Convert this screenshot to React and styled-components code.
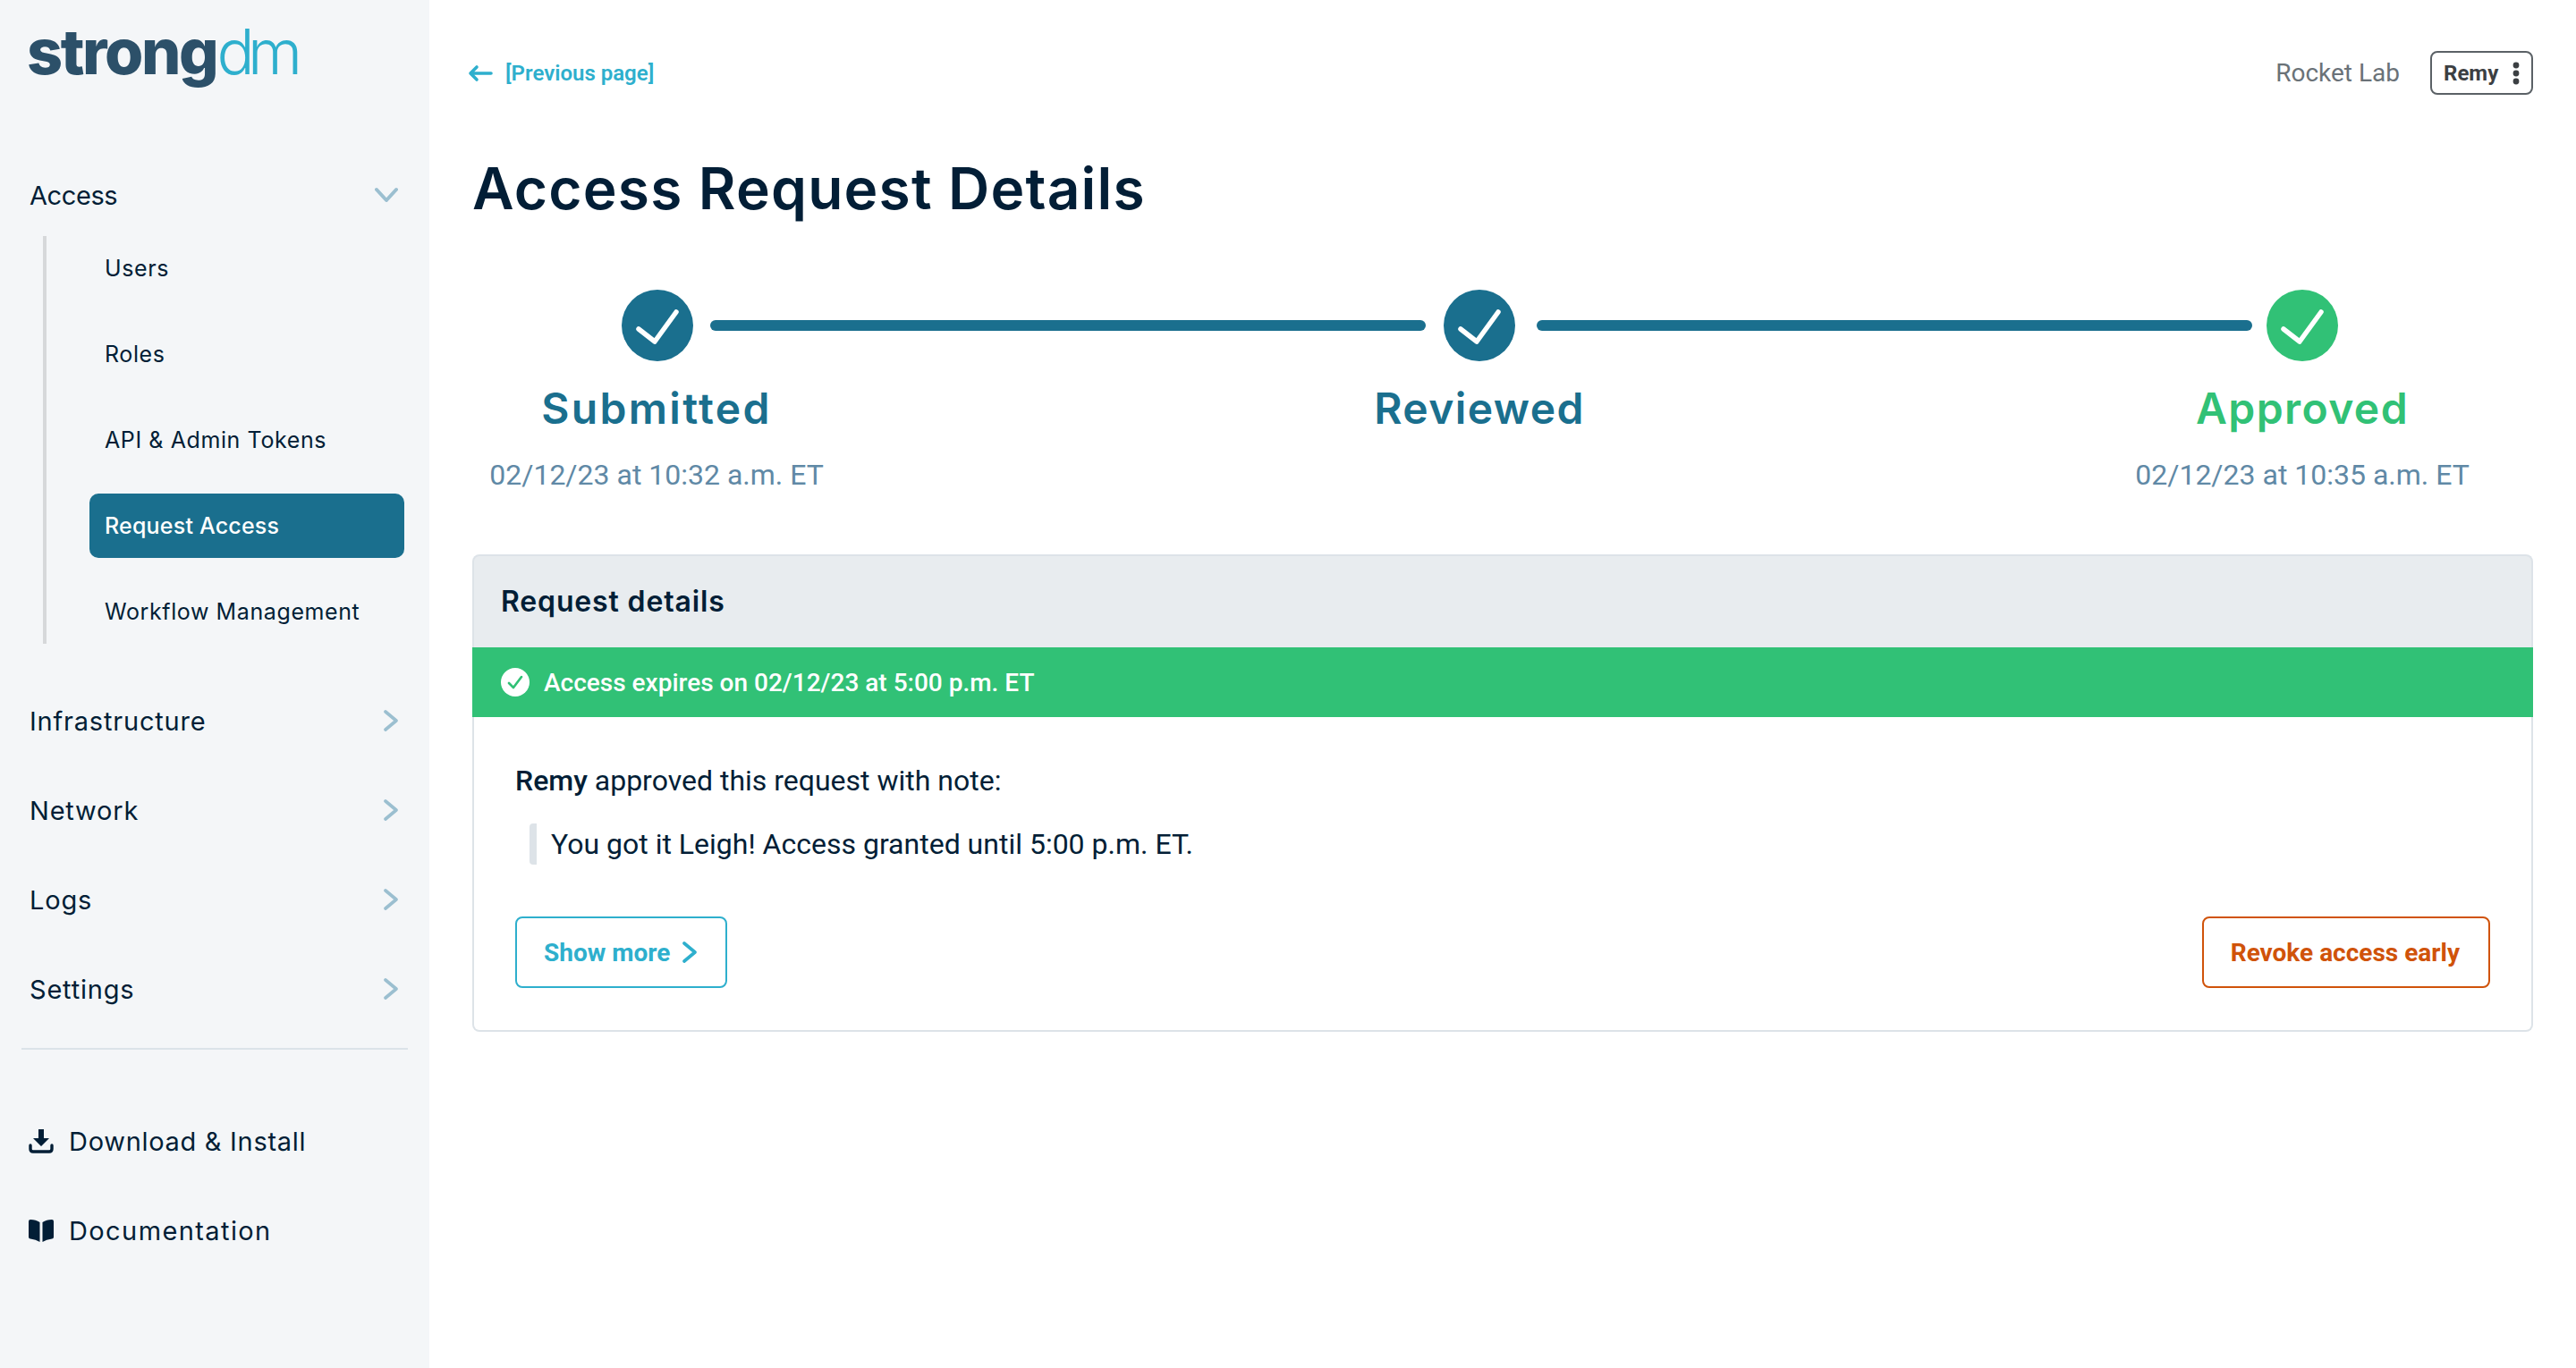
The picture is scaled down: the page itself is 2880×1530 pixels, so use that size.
import styled, { createGlobalStyle } from "styled-components";

const GlobalStyle = createGlobalStyle`
  html, body {
    margin: 0;
    padding: 0;
    background: #fff;
  }
  * {
    box-sizing: border-box;
  }
`;

const display = `"Inter", "Liberation Sans", sans-serif`;
const body = `"Roboto", "Liberation Sans", sans-serif`;

const Page = styled.div`
  display: flex;
  width: 2880px;
  height: 1530px;
  overflow: hidden;
`;

const Sidebar = styled.aside`
  width: 480px;
  flex: none;
  background: #f4f6f8;
  padding: 16px 24px 0;
  font-family: ${display};
  color: #021e36;
`;

const Logo = styled.div`
  height: 84px;
  margin: 0 0 0 6px;
  font-size: 70px;
  line-height: 84px;
  font-weight: 800;
  letter-spacing: -2.4px;
  color: #2c5069;
  white-space: nowrap;
`;

const LogoLight = styled.span`
  font-weight: 300;
  letter-spacing: -7.5px;
  color: #2eafcd;
`;

const NavRow = styled.div`
  display: flex;
  align-items: center;
  justify-content: space-between;
  height: 100px;
  padding: 0 11px 0 9px;
  font-size: 29px;
  font-weight: 400;
  letter-spacing: ${(p) => p.$tracking ?? 0.8}px;
  margin-top: ${(p) => p.$top || 0}px;
`;

const SubNav = styled.div`
  display: flex;
  flex-direction: column;
  gap: 24px;
  margin: -4px 4px 36px 24px;
  padding: 0 0 0 48px;
  border-left: 4px solid #d6d8da;
  height: 456px;
`;

const SubItem = styled.div`
  display: flex;
  align-items: center;
  height: 72px;
  padding-left: 17px;
  border-radius: 10px;
  font-size: 25px;
  letter-spacing: ${(p) => (p.$active ? 0.2 : 0.6)}px;
  font-weight: ${(p) => (p.$active ? 500 : 400)};
  background: ${(p) => (p.$active ? "#1a6f8e" : "transparent")};
  color: ${(p) => (p.$active ? "#fff" : "#021e36")};
`;

const Divider = styled.div`
  height: 2px;
  background: #dbe3e9;
  margin: 16px 0 52px;
`;

const LinkRow = styled.div`
  display: flex;
  align-items: center;
  gap: 17px;
  height: 100px;
  padding-left: 8px;
  font-size: 29px;
  letter-spacing: ${(p) => p.$tracking}px;
`;

const Main = styled.main`
  flex: 1;
  min-width: 0;
  padding: 57px 48px 0;
`;

const TopBar = styled.header`
  display: flex;
  align-items: center;
  justify-content: space-between;
  height: 49px;
`;

const BackLink = styled.a`
  display: flex;
  align-items: center;
  gap: 14.5px;
  margin-left: -5.5px;
  font-family: ${body};
  font-size: 24px;
  font-weight: 600;
  color: #2eafcd;
`;

const Account = styled.div`
  display: flex;
  align-items: center;
  gap: 34px;
`;

const OrgName = styled.span`
  font-family: ${body};
  font-size: 28px;
  color: #6a7278;
`;

const UserButton = styled.button`
  display: flex;
  align-items: center;
  justify-content: space-between;
  width: 115px;
  height: 49px;
  padding: 0 13px 0 13px;
  background: #fff;
  border: 2px solid #5b6166;
  border-radius: 8px;
  font-family: ${body};
  font-size: 24px;
  font-weight: 700;
  color: #3c4043;
`;

const Title = styled.h1`
  margin: 65px 0 0;
  font-family: ${display};
  font-size: 64px;
  line-height: 80px;
  font-weight: 600;
  letter-spacing: 1.2px;
  color: #021e36;
`;

const Track = styled.div`
  display: flex;
  align-items: center;
  margin-top: 73px;
  padding-left: 167px;
`;

const Circle = styled.span`
  display: flex;
  flex: none;
  width: 80px;
  height: 80px;
  border-radius: 50%;
  background: ${(p) => p.$color};
`;

const TrackLine = styled.span`
  flex: none;
  width: 800px;
  height: 12px;
  border-radius: 6px;
  background: #1a6f8e;
  margin: ${(p) => p.$margin};
`;

const Captions = styled.div`
  display: grid;
  grid-template-columns: repeat(3, 400px);
  column-gap: 520px;
  margin-top: 23px;
  padding-left: 6px;
`;

const Caption = styled.div`
  display: flex;
  flex-direction: column;
  align-items: center;
  gap: 24px;
`;

const StepName = styled.div`
  font-family: ${display};
  font-size: 48px;
  line-height: 60px;
  font-weight: 600;
  letter-spacing: ${(p) => p.$tracking}px;
  color: ${(p) => p.$color};
`;

const StepDate = styled.div`
  font-family: ${body};
  font-size: 32px;
  line-height: 40px;
  color: #6089a6;
`;

const Card = styled.section`
  margin-top: 69px;
  height: 534px;
  display: flex;
  flex-direction: column;
`;

const CardHeader = styled.div`
  display: flex;
  align-items: center;
  height: 104px;
  padding: 0 0 2px 30px;
  background: #e8ecef;
  border: 2px solid #dde3e8;
  border-bottom: 0;
  border-radius: 8px 8px 0 0;
  font-family: ${display};
  font-size: 32px;
  font-weight: 600;
  letter-spacing: 0.85px;
  color: #021e36;
`;

const Banner = styled.div`
  display: flex;
  align-items: center;
  gap: 16px;
  height: 78px;
  padding-left: 32px;
  background: #31c176;
  font-family: ${body};
  font-size: 28px;
  font-weight: 500;
  color: #fff;
`;

const CardBody = styled.div`
  flex: 1;
  padding: 48px 46px 0;
  border: 2px solid #dde3e8;
  border-top: 0;
  border-radius: 0 0 8px 8px;
  font-family: ${body};
  font-size: 32px;
  color: #021e36;
`;

const Sentence = styled.p`
  margin: 0;
  height: 46px;
  line-height: 46px;
`;

const Strong = styled.strong`
  font-weight: 500;
`;

const Note = styled.blockquote`
  display: flex;
  align-items: center;
  margin: 25px 0 0 16px;
  height: 46px;
  padding-left: 16px;
  border-left: 8px solid #dde3e8;
  border-radius: 4px;
`;

const Actions = styled.div`
  display: flex;
  justify-content: space-between;
  margin-top: 58px;
`;

const ActionButton = styled.button`
  display: flex;
  align-items: center;
  gap: 14px;
  height: 80px;
  padding: 0 32px 0 30px;
  background: #fff;
  border: 2px solid ${(p) => p.$color};
  border-radius: 8px;
  font-family: ${body};
  font-size: 28px;
  font-weight: 700;
  color: ${(p) => p.$color};
`;

const ChevronDown = () => (
  <svg width="26" height="18" viewBox="0 0 26 18" fill="none" stroke="#9bbfd0" strokeWidth="4" strokeLinecap="round" strokeLinejoin="round">
    <polyline points="2,3 13,15 24,3" />
  </svg>
);

const ChevronRight = ({ color = "#9bbfd0", width = 16, height = 24 }) => (
  <svg width={width} height={height} viewBox="0 0 16 24" fill="none" stroke={color} strokeWidth="3.6" strokeLinecap="round" strokeLinejoin="round">
    <polyline points="2,2 14,12 2,22" />
  </svg>
);

const DownloadIcon = () => (
  <svg width="28" height="28" viewBox="0 0 28 28">
    <path d="M11 1h6v10h6L14 20 5 11h6z" fill="#021e36" />
    <path d="M2 19v4q0 3 3 3h18q3 0 3-3v-4" fill="none" stroke="#021e36" strokeWidth="3.4" strokeLinecap="round" />
  </svg>
);

const BookIcon = () => (
  <svg width="28" height="26" viewBox="0 0 28 26" fill="#021e36">
    <path d="M0 3q0-2 2-2 6 0 10.500 3v22Q8 23 2 22.500q-2 0-2-2z" />
    <path d="M28 3q0-2-2-2-6 0-10.500 3v22q4.500-3 10.500-3.500 2 0 2-2z" />
  </svg>
);

const BackArrow = () => (
  <svg width="28" height="20" viewBox="0 0 28 20" fill="none" stroke="#2eafcd" strokeWidth="3.6" strokeLinecap="round" strokeLinejoin="round">
    <path d="M3 10h23M10 3l-7 7 7 7" />
  </svg>
);

const Kebab = () => (
  <svg width="8" height="26" viewBox="0 0 8 26" fill="#3c4043">
    <circle cx="4" cy="4" r="3.4" />
    <circle cx="4" cy="13" r="3.4" />
    <circle cx="4" cy="22" r="3.4" />
  </svg>
);

const StepCheck = () => (
  <svg width="80" height="80" viewBox="0 0 80 80" fill="none" stroke="#fff" strokeWidth="5.500" strokeLinecap="round" strokeLinejoin="round">
    <polyline points="19,44 37,58 61,25" />
  </svg>
);

const BannerCheck = () => (
  <svg width="32" height="32" viewBox="0 0 32 32">
    <circle cx="16" cy="16" r="16" fill="#fff" />
    <polyline points="9,17 14,22 23,10" fill="none" stroke="#31c176" strokeWidth="2.600" strokeLinecap="round" strokeLinejoin="round" />
  </svg>
);

const subItems = ["Users", "Roles", "API & Admin Tokens", "Request Access", "Workflow Management"];
const navItems = ["Infrastructure", "Network", "Logs", "Settings"];

const steps = [
  { name: "Submitted", date: "02/12/23 at 10:32 a.m. ET", color: "#1a6f8e", tracking: 2.3 },
  { name: "Reviewed", date: "", color: "#1a6f8e", tracking: 1.4 },
  { name: "Approved", date: "02/12/23 at 10:35 a.m. ET", color: "#31c176", tracking: 1.4 },
];

const App = () => {
  return (
    <Page>
      <GlobalStyle />
      <Sidebar>
        <Logo>
          strong<LogoLight>dm</LogoLight>
        </Logo>
        <NavRow $top={68} $tracking={-0.4}>
          Access
          <ChevronDown />
        </NavRow>
        <SubNav>
          {subItems.map((item) => (
            <SubItem key={item} $active={item === "Request Access"}>
              {item}
            </SubItem>
          ))}
        </SubNav>
        {navItems.map((item) => (
          <NavRow key={item}>
            {item}
            <ChevronRight />
          </NavRow>
        ))}
        <Divider />
        <LinkRow $tracking={0.7}>
          <DownloadIcon />
          Download &amp; Install
        </LinkRow>
        <LinkRow $tracking={1.4}>
          <BookIcon />
          Documentation
        </LinkRow>
      </Sidebar>
      <Main>
        <TopBar>
          <BackLink>
            <BackArrow />
            [Previous page]
          </BackLink>
          <Account>
            <OrgName>Rocket Lab</OrgName>
            <UserButton>
              Remy
              <Kebab />
            </UserButton>
          </Account>
        </TopBar>
        <Title>Access Request Details</Title>
        <Track>
          <Circle $color="#1a6f8e">
            <StepCheck />
          </Circle>
          <TrackLine $margin="0 20px 0 19px" />
          <Circle $color="#1a6f8e">
            <StepCheck />
          </Circle>
          <TrackLine $margin="0 16px 0 24px" />
          <Circle $color="#31c176">
            <StepCheck />
          </Circle>
        </Track>
        <Captions>
          {steps.map((step) => (
            <Caption key={step.name}>
              <StepName $color={step.color} $tracking={step.tracking}>
                {step.name}
              </StepName>
              {step.date && <StepDate>{step.date}</StepDate>}
            </Caption>
          ))}
        </Captions>
        <Card>
          <CardHeader>Request details</CardHeader>
          <Banner>
            <BannerCheck />
            Access expires on 02/12/23 at 5:00 p.m. ET
          </Banner>
          <CardBody>
            <Sentence>
              <Strong>Remy</Strong> approved this request with note:
            </Sentence>
            <Note>You got it Leigh! Access granted until 5:00 p.m. ET.</Note>
            <Actions>
              <ActionButton $color="#2eafcd">
                Show more
                <ChevronRight color="#2eafcd" width="16" height="26" />
              </ActionButton>
              <ActionButton $color="#d0530a">Revoke access early</ActionButton>
            </Actions>
          </CardBody>
        </Card>
      </Main>
    </Page>
  );
};

export default App;
